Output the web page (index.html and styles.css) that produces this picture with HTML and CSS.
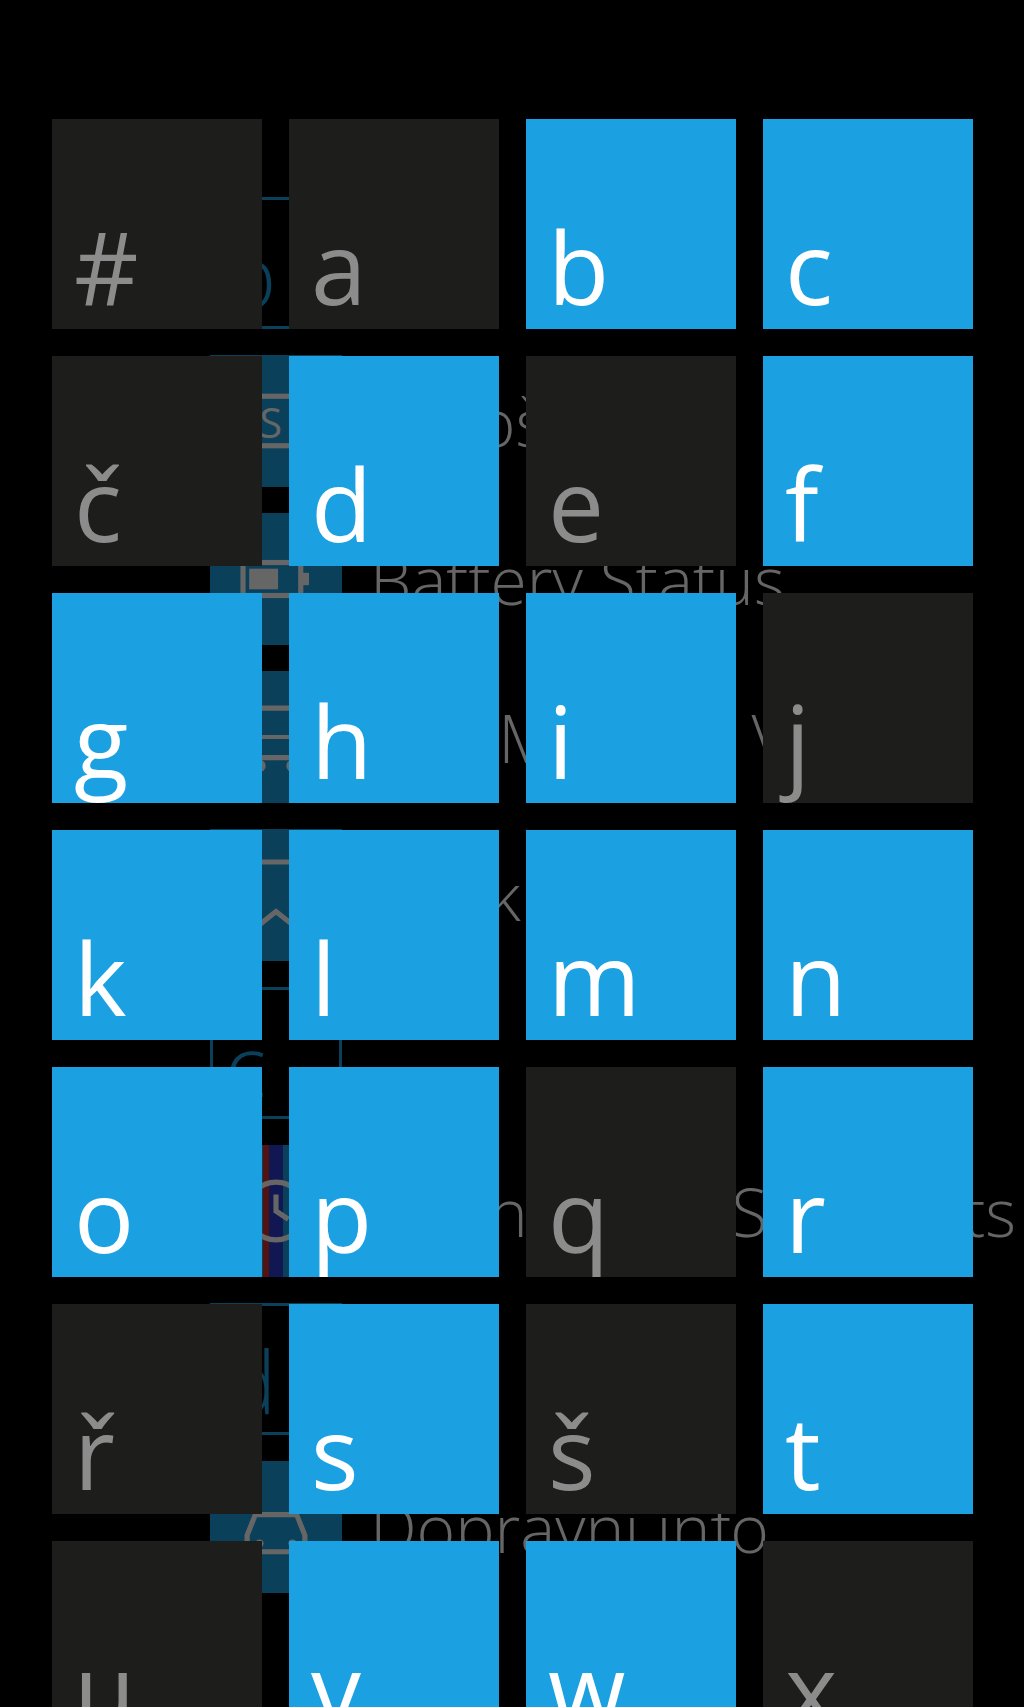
FILE: index.html
```html
<!DOCTYPE html>
<html lang="cs">
<head>
<meta charset="utf-8">
<title>Jump list</title>
<link rel="stylesheet" href="styles.css">
</head>
<body>
<div class="screen">
  <ul class="applist">
    <li class="row"><span class="group-tile">b</span></li>
    <li class="row"><span class="icon"><svg viewBox="0 0 64 64" width="132" height="132"><rect x="18" y="20" width="26" height="24" fill="none" stroke="#fff" stroke-width="2.5"/><text x="24" y="40" class="icon-text">S</text></svg></span><span class="name">Bazoš.cz</span></li>
    <li class="row"><span class="icon"><svg viewBox="0 0 64 64" width="132" height="132"><rect x="16" y="24" width="28" height="16" fill="none" stroke="#fff" stroke-width="2.5"/><rect x="44" y="29" width="4" height="6" fill="#fff"/><rect x="19" y="27" width="14" height="10" fill="#fff"/></svg></span><span class="name">Battery Status</span></li>
    <li class="row"><span class="icon"><svg viewBox="0 0 64 64" width="132" height="132"><rect x="18" y="18" width="28" height="24" rx="3" fill="none" stroke="#fff" stroke-width="2.5"/><line x1="18" y1="32" x2="46" y2="32" stroke="#fff" stroke-width="2"/><circle cx="24" cy="46" r="3" fill="#fff"/><circle cx="40" cy="46" r="3" fill="#fff"/></svg></span><span class="name">Bus Monitor View</span></li>
    <li class="row"><span class="icon"><svg viewBox="0 0 64 64" width="132" height="132"><path d="M22 16 H42 V48 L32 40 L22 48 Z" fill="none" stroke="#fff" stroke-width="2.5"/></svg></span><span class="name">Bookmarks</span></li>
    <li class="row"><span class="group-tile">c</span></li>
    <li class="row"><span class="icon icon-multi"><svg viewBox="0 0 64 64" width="132" height="132"><circle cx="32" cy="32" r="14" fill="none" stroke="#fff" stroke-width="2.5"/><path d="M32 24 V32 L38 36" fill="none" stroke="#fff" stroke-width="2.5"/></svg></span><span class="name">Countdown Shortcuts</span></li>
    <li class="row"><span class="group-tile">d</span></li>
    <li class="row"><span class="icon"><svg viewBox="0 0 64 64" width="132" height="132"><path d="M18 36 L22 26 H42 L46 36 V44 H18 Z" fill="none" stroke="#fff" stroke-width="2.5"/><circle cx="24" cy="40" r="2" fill="#fff"/><circle cx="40" cy="40" r="2" fill="#fff"/></svg></span><span class="name">Dopravní info</span></li>
  </ul>

  <div class="jumplist">
    <div class="grid">
      <div class="key"><span class="glyph">#</span></div>
      <div class="key"><span class="glyph">a</span></div>
      <div class="key on"><span class="glyph">b</span></div>
      <div class="key on"><span class="glyph">c</span></div>

      <div class="key"><span class="glyph">č</span></div>
      <div class="key on"><span class="glyph">d</span></div>
      <div class="key"><span class="glyph">e</span></div>
      <div class="key on"><span class="glyph">f</span></div>

      <div class="key on"><span class="glyph">g</span></div>
      <div class="key on"><span class="glyph">h</span></div>
      <div class="key on"><span class="glyph">i</span></div>
      <div class="key"><span class="glyph">j</span></div>

      <div class="key on"><span class="glyph">k</span></div>
      <div class="key on"><span class="glyph">l</span></div>
      <div class="key on"><span class="glyph">m</span></div>
      <div class="key on"><span class="glyph">n</span></div>

      <div class="key on"><span class="glyph">o</span></div>
      <div class="key on"><span class="glyph">p</span></div>
      <div class="key"><span class="glyph">q</span></div>
      <div class="key on"><span class="glyph">r</span></div>

      <div class="key"><span class="glyph">ř</span></div>
      <div class="key on"><span class="glyph">s</span></div>
      <div class="key"><span class="glyph">š</span></div>
      <div class="key on"><span class="glyph">t</span></div>

      <div class="key"><span class="glyph">u</span></div>
      <div class="key on"><span class="glyph">v</span></div>
      <div class="key on"><span class="glyph">w</span></div>
      <div class="key"><span class="glyph">x</span></div>
    </div>
  </div>
</div>
</body>
</html>
```

FILE: styles.css
```css
html, body {
  margin: 0;
  padding: 0;
  background: #000;
}

.screen {
  position: relative;
  width: 1024px;
  height: 1707px;
  overflow: hidden;
  background: #000;
  font-family: "Open Sans", "Noto Sans", "DejaVu Sans", sans-serif;
}

/* background app list, dimmed by the jump list overlay */
.applist {
  list-style: none;
  margin: 0;
  padding: 197px 0 0 210px;
  display: flex;
  flex-direction: column;
  gap: 26px;
}

.row {
  display: flex;
  align-items: center;
  gap: 28px;
  height: 132px;
}

.icon {
  flex: none;
  width: 132px;
  height: 132px;
  background: #1ba1e2;
}

.icon svg {
  display: block;
}

.icon-multi {
  background: linear-gradient(90deg, #1ba1e2 0 40%, #d0302a 40% 45%, #2a3ad0 45% 55%, #1ba1e2 55%);
}

.icon-text {
  font-family: "Open Sans", "Noto Sans", sans-serif;
  font-size: 20px;
  fill: #fff;
}

.name {
  font-size: 66px;
  font-weight: 300;
  color: #fff;
  white-space: nowrap;
  line-height: 1;
}

.group-tile {
  box-sizing: border-box;
  flex: none;
  width: 132px;
  height: 132px;
  border: 3px solid #1ba1e2;
  color: #1ba1e2;
  font-size: 86px;
  font-weight: 300;
  line-height: 1;
  display: flex;
  align-items: flex-end;
  padding: 0 0 8px 12px;
}

/* jump list overlay */
.jumplist {
  position: absolute;
  inset: 0;
  background: rgba(0, 0, 0, 0.6);
  padding: 119px 0 0 52px;
}

.grid {
  display: grid;
  grid-template-columns: repeat(4, 210px);
  grid-auto-rows: 210px;
  gap: 27px;
}

.key {
  box-sizing: border-box;
  display: flex;
  align-items: flex-end;
  padding: 0 0 13px 22px;
  background: #1d1d1b;
  color: #8c8c8c;
}

.key.on {
  background: #1ba1e2;
  color: #fff;
}

.glyph {
  font-size: 100px;
  line-height: 1;
  font-weight: 500;
}
```
